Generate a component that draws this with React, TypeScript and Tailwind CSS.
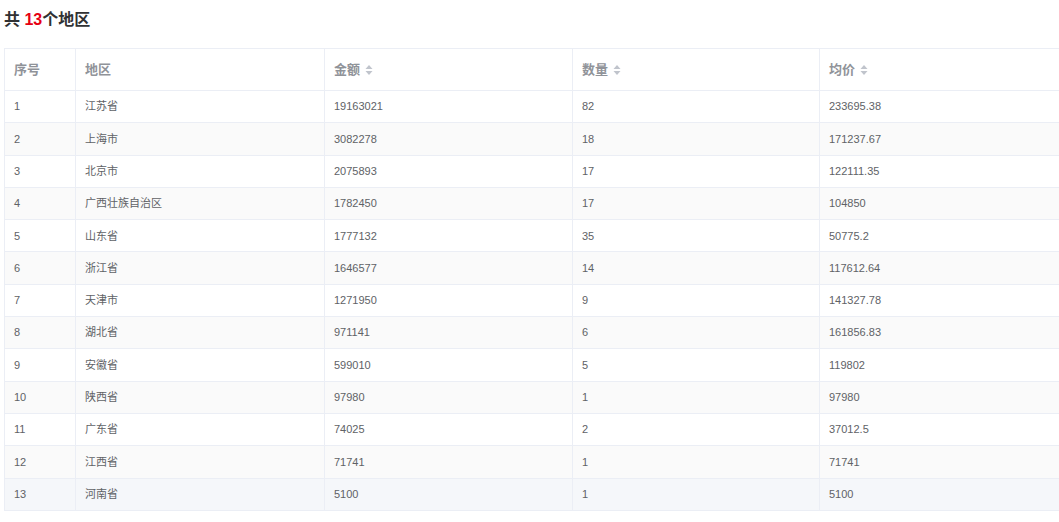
const rows = [
["1","江苏省","19163021","82","233695.38"],
["2","上海市","3082278","18","171237.67"],
["3","北京市","2075893","17","122111.35"],
["4","广西壮族自治区","1782450","17","104850"],
["5","山东省","1777132","35","50775.2"],
["6","浙江省","1646577","14","117612.64"],
["7","天津市","1271950","9","141327.78"],
["8","湖北省","971141","6","161856.83"],
["9","安徽省","599010","5","119802"],
["10","陕西省","97980","1","97980"],
["11","广东省","74025","2","37012.5"],
["12","江西省","71741","1","71741"],
["13","河南省","5100","1","5100"],
];
const widths = ["w-[71px]","w-[249px]","w-[248px]","w-[247px]","flex-1"];
function Sort() {
  return (
    <svg width="8" height="12" viewBox="0 0 8 12" className="ml-[5px]">
      <path d="M4 1 L7.5 5 H0.5 Z" fill="#c0c4cc" />
      <path d="M4 11 L7.5 7 H0.5 Z" fill="#c0c4cc" />
    </svg>
  );
}
export default function App() {
  return (
    <div className="w-[1059px] h-[522px] bg-white overflow-hidden" style={{fontFamily: '"Liberation Sans", "Noto Sans CJK SC", sans-serif'}}>
      <div className="h-[48px] pl-[4px] pt-[8px] text-[16px] font-bold text-[#303133] leading-[24px]">
        共 <span className="text-[#e60012]">13</span>个地区
      </div>
      <div className="ml-[4px] w-[1060px] border-t border-l border-[#ebeef5]">
        <div className="flex h-[42px] border-b border-[#ebeef5] text-[13px] font-bold text-[#909399]">
          {["序号","地区","金额","数量","均价"].map((h,i)=>(
            <div key={i} className={`${widths[i]} border-r border-[#ebeef5] flex items-center pl-[9px]`}>
              {h}{i>1 && <Sort/>}
            </div>
          ))}
        </div>
        {rows.map((r,ri)=>(
          <div key={ri} className={`flex h-[32.3px] border-b border-[#ebeef5] text-[11px] text-[#606266] ${ri===12?"bg-[#f5f7fa]":ri%2===1?"bg-[#fafafa]":"bg-white"}`}>
            {r.map((c,i)=>(
              <div key={i} className={`${widths[i]} border-r border-[#ebeef5] flex items-center pl-[9px]`}>{c}</div>
            ))}
          </div>
        ))}
      </div>
    </div>
  );
}
